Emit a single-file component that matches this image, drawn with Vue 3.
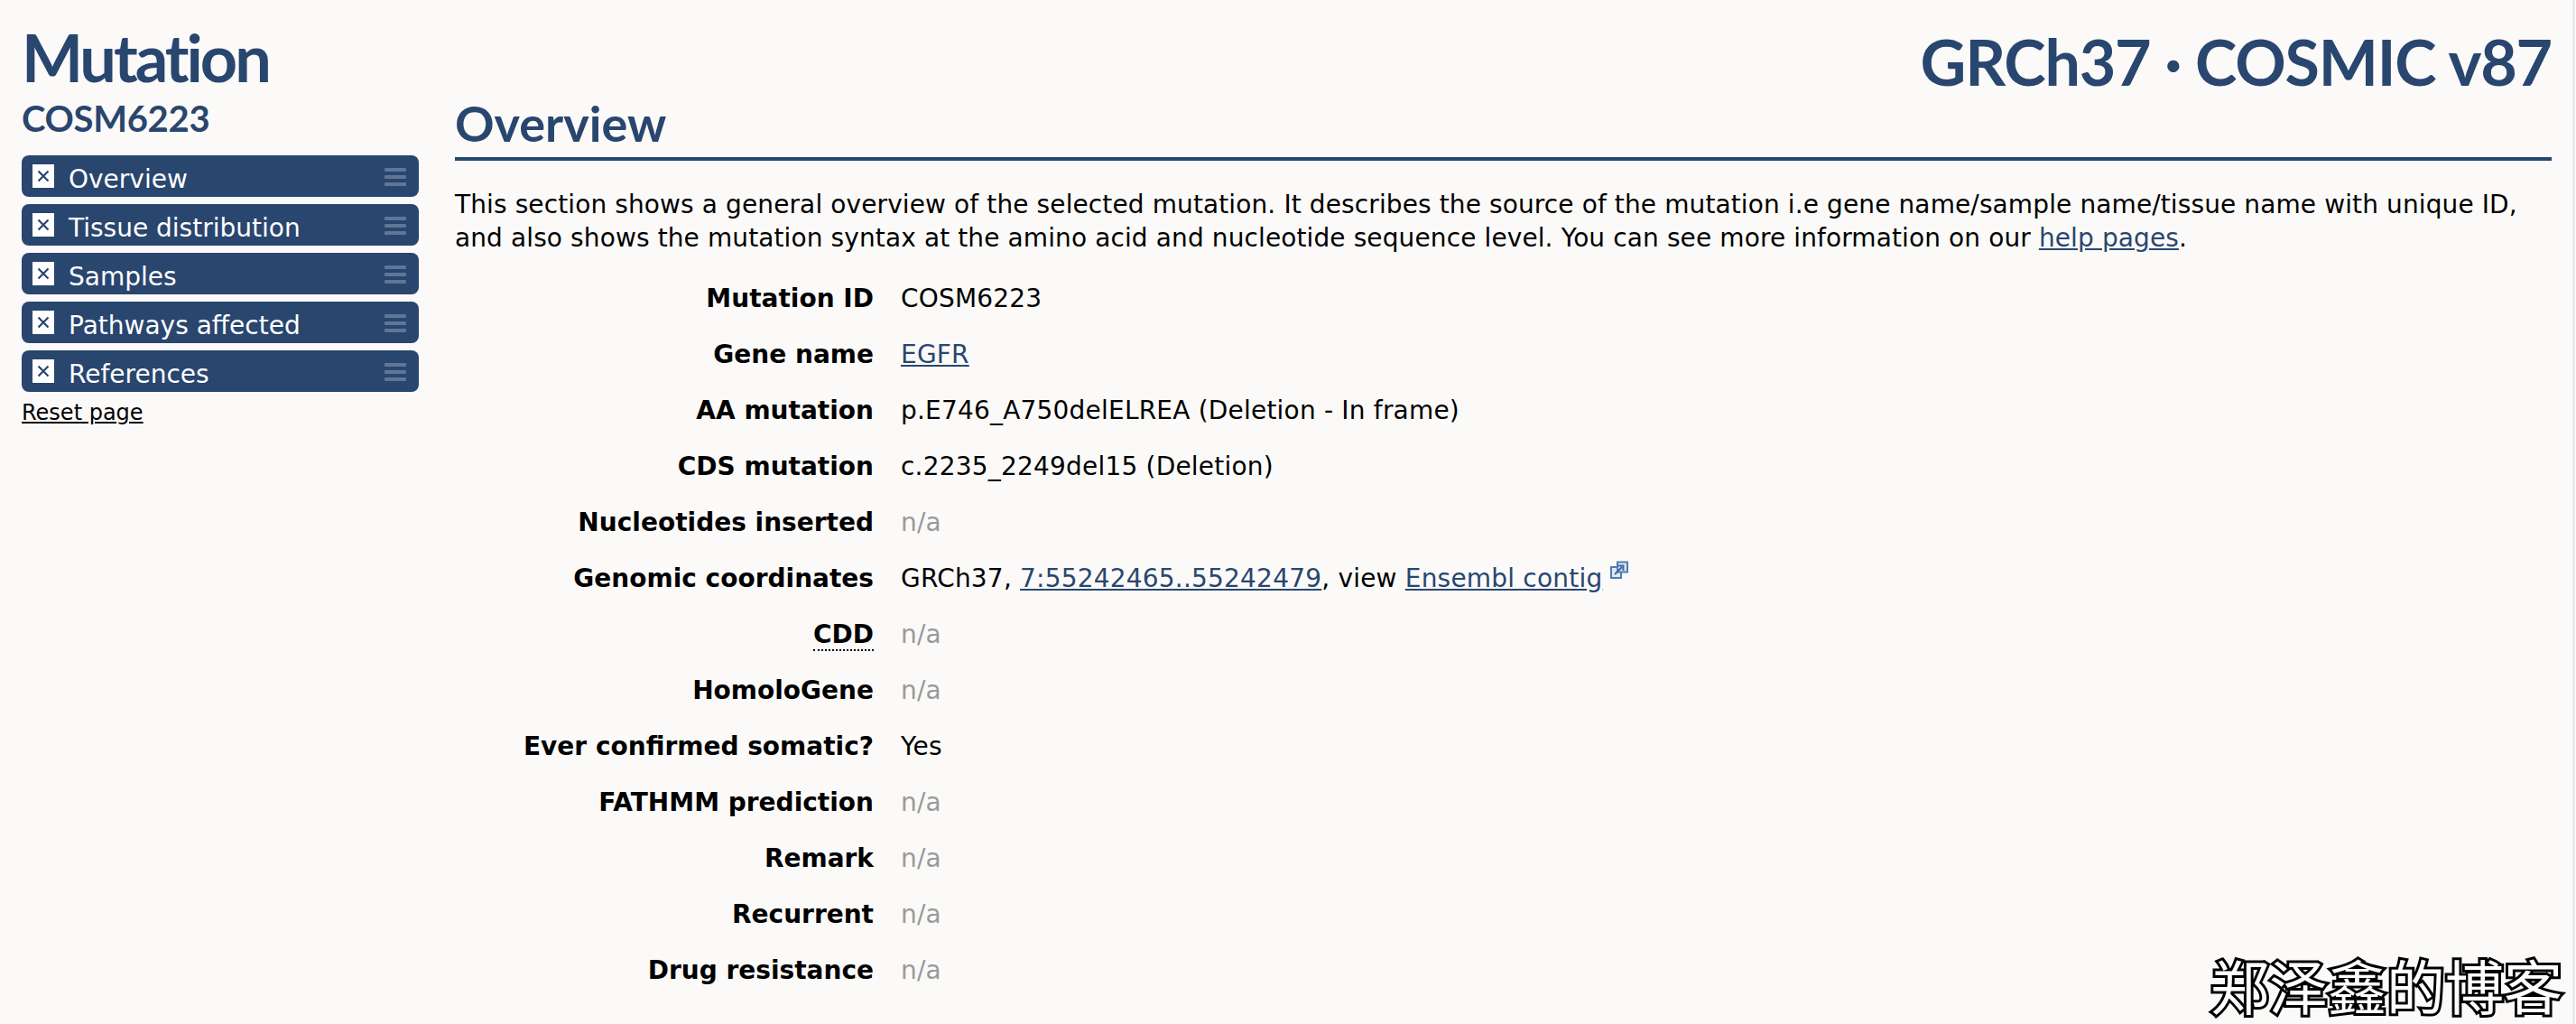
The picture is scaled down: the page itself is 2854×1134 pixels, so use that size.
<script setup>
const navItems = ["Overview", "Tissue distribution", "Samples", "Pathways affected", "References"];

// rows of the overview table; "na" rows are greyed out
const rows = [
  { label: "Mutation ID", value: "COSM6223" },
  { label: "Gene name", link: "EGFR" },
  { label: "AA mutation", value: "p.E746_A750delELREA (Deletion - In frame)" },
  { label: "CDS mutation", value: "c.2235_2249del15 (Deletion)" },
  { label: "Nucleotides inserted", na: true },
  { label: "Genomic coordinates", coords: true },
  { label: "CDD", na: true, abbr: true },
  { label: "HomoloGene", na: true },
  { label: "Ever confirmed somatic?", value: "Yes" },
  { label: "FATHMM prediction", na: true },
  { label: "Remark", na: true },
  { label: "Recurrent", na: true },
  { label: "Drug resistance", na: true },
];
</script>

<template>
  <div class="page">
    <aside class="sidebar">
      <h1 class="title">Mutation</h1>
      <h2 class="subtitle">COSM6223</h2>
      <ul class="nav">
        <li v-for="item in navItems" :key="item" class="nav-item">
          <span class="check">
            <svg width="14" height="14" viewBox="0 0 14 14">
              <path d="M1.5 1.5 L12.5 12.5 M12.5 1.5 L1.5 12.5" stroke="#29466f" stroke-width="2.2" fill="none" />
            </svg>
          </span>
          <span class="nav-label">{{ item }}</span>
          <span class="handle"><i></i><i></i><i></i></span>
        </li>
      </ul>
      <a class="reset" href="#">Reset page</a>
    </aside>

    <main class="content">
      <div class="release">GRCh37 · COSMIC v87</div>
      <h2 class="section-title">Overview</h2>
      <p class="intro">
        This section shows a general overview of the selected mutation. It describes the source of the mutation i.e gene name/sample name/tissue name with unique ID,
        and also shows the mutation syntax at the amino acid and nucleotide sequence level. You can see more information on our
        <a href="#">help pages</a>.
      </p>

      <dl class="details">
        <template v-for="row in rows" :key="row.label">
          <dt><span :class="{ dotted: row.abbr }">{{ row.label }}</span></dt>
          <dd v-if="row.na" class="na">n/a</dd>
          <dd v-else-if="row.link"><a href="#">{{ row.link }}</a></dd>
          <dd v-else-if="row.coords">
            GRCh37, <a href="#">7:55242465..55242479</a>, view <a href="#">Ensembl contig</a>
            <svg class="ext" width="20" height="21" viewBox="0 0 20 21">
              <rect x="1" y="7" width="11" height="12" fill="#dfe8f2" stroke="#4f7cb0" stroke-width="2" />
              <rect x="8" y="1.5" width="11" height="11" fill="#dfe8f2" stroke="#4f7cb0" stroke-width="2" />
              <path d="M5 15 L13 7 M9 5.5 H14.5 V11" stroke="#3c6aa3" stroke-width="2" fill="none" />
            </svg>
          </dd>
          <dd v-else>{{ row.value }}</dd>
        </template>
      </dl>
    </main>

    <div class="watermark">郑泽鑫的博客</div>
  </div>
</template>

<style>
body {
  background: #fff;
}
</style>

<style scoped>
.page {
  display: flex;
  position: relative;
  height: 1134px;
  overflow: hidden;
  margin-right: 1px;
  padding: 0 23px 0 24px;
  box-sizing: border-box;
  border-right: 3px solid #e8e8e8;
  background: #fbfaf8;
  color: #000;
  font-family: "DejaVu Sans", Verdana, sans-serif;
  font-size: 28px;
}

.sidebar {
  flex: 0 0 440px;
  margin-right: 40px;
}

.title {
  margin: 0;
  padding-top: 19px;
  font-family: Lato, sans-serif;
  font-size: 72px;
  line-height: 89px;
  font-weight: 700;
  letter-spacing: -3px;
  color: #29466f;
}

.subtitle {
  margin: 0;
  padding-top: 1px;
  font-family: Lato, sans-serif;
  font-size: 40px;
  line-height: 44px;
  font-weight: 700;
  letter-spacing: -0.3px;
  color: #29466f;
}

.nav {
  list-style: none;
  margin: 0;
  padding: 19px 0 0;
}

.nav-item {
  display: flex;
  align-items: flex-start;
  height: 46px;
  margin-bottom: 8px;
  padding: 10px 14px 0 12px;
  box-sizing: border-box;
  background: #29466f;
  border-radius: 8px;
  color: #fff;
}

.check {
  display: flex;
  align-items: center;
  justify-content: center;
  flex: 0 0 24px;
  height: 26px;
  background: #fff;
}

.nav-label {
  flex: 1;
  margin-left: 16px;
  line-height: 34px;
}

.handle {
  display: flex;
  flex-direction: column;
  gap: 4px;
  width: 24px;
  padding-top: 4px;
}

.handle i {
  display: block;
  height: 4px;
  border-radius: 1px;
  background: #5f7697;
}

.reset {
  display: block;
  font-size: 24px;
  line-height: 30px;
  margin-top: 3px;
  color: #000;
}

.content {
  flex: 1;
  min-width: 0;
}

.release {
  padding-top: 32px;
  text-align: right;
  font-family: Lato, sans-serif;
  font-size: 70px;
  line-height: 72px;
  font-weight: 700;
  letter-spacing: -1.2px;
  color: #29466f;
}

.section-title {
  margin: 0;
  padding-top: 3px;
  height: 67px;
  border-bottom: 4px solid #29466f;
  font-family: Lato, sans-serif;
  font-size: 54px;
  line-height: 60px;
  font-weight: 700;
  color: #29466f;
}

.intro {
  margin: 30px 0 0;
  line-height: 37px;
  letter-spacing: 0.11px;
}

a {
  color: #29466f;
}

.details {
  display: grid;
  grid-template-columns: 464px 1fr;
  column-gap: 30px;
  margin: 18px 0 0;
  grid-auto-rows: 62px;
  line-height: 62px;
}

dt {
  text-align: right;
  font-weight: 700;
}

dd {
  margin: 0;
  letter-spacing: 0.2px;
}

.na {
  color: #999;
}

.dotted {
  border-bottom: 2px dotted #000;
}

.ext {
  vertical-align: 8px;
  margin-left: 9px;
}

.watermark {
  position: absolute;
  right: 11px;
  bottom: 6px;
  font-family: "Noto Sans CJK SC", sans-serif;
  font-size: 65px;
  line-height: 76px;
  color: #fff;
  -webkit-text-stroke: 6px #000;
  paint-order: stroke fill;
}
</style>
